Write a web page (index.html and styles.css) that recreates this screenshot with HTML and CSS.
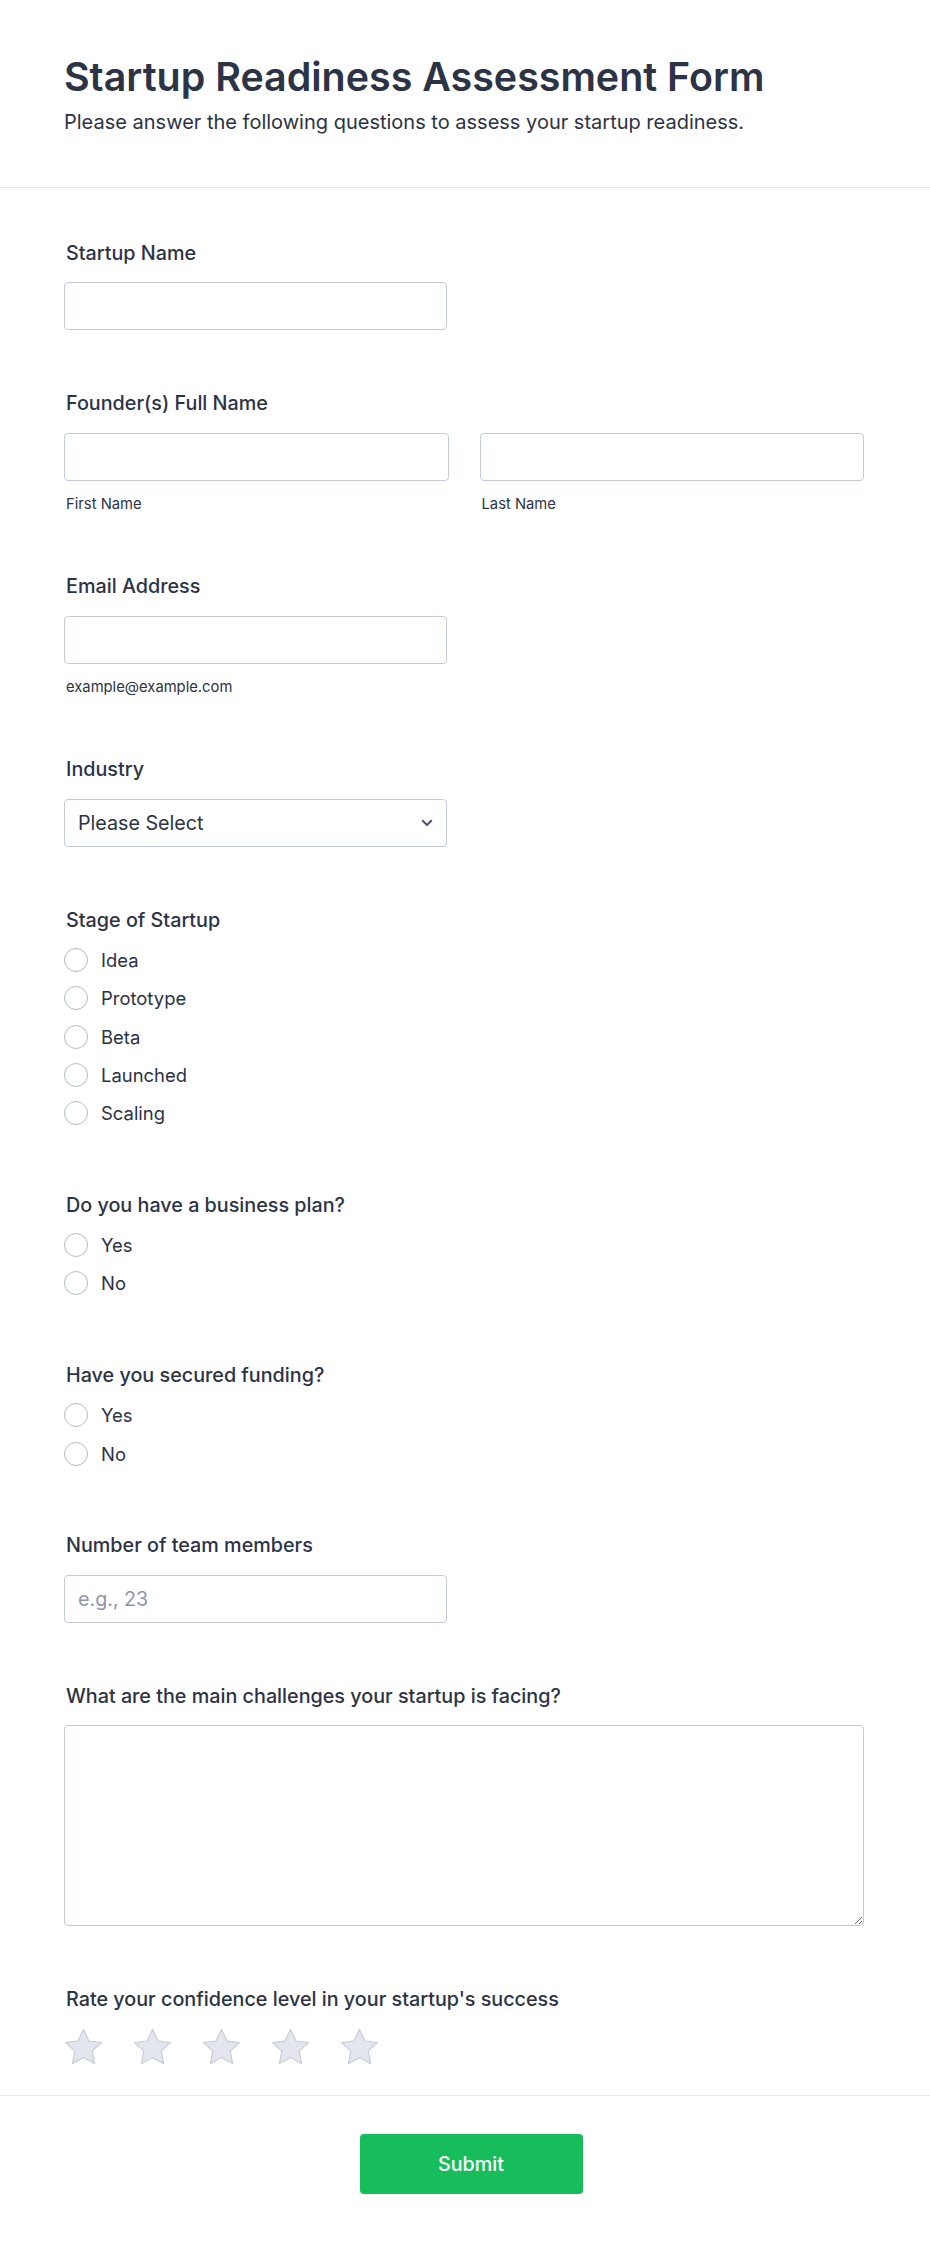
FILE: index.html
```html
<!DOCTYPE html>
<html lang="en">
<head>
<meta charset="utf-8">
<title>Startup Readiness Assessment Form</title>
<link rel="stylesheet" href="styles.css">
</head>
<body>
<div class="page">
  <header class="form-header">
    <h1 class="form-title">Startup Readiness Assessment Form</h1>
    <p class="form-subtitle">Please answer the following questions to assess your startup readiness.</p>
  </header>

  <main class="form-body">
    <div class="field">
      <label class="field-label" for="startup">Startup Name</label>
      <input class="text-input w-half" id="startup" type="text">
    </div>

    <div class="field">
      <label class="field-label">Founder(s) Full Name</label>
      <div class="name-grid">
        <div class="name-col">
          <input class="text-input" type="text">
          <span class="sublabel">First Name</span>
        </div>
        <div class="name-col">
          <input class="text-input" type="text">
          <span class="sublabel">Last Name</span>
        </div>
      </div>
    </div>

    <div class="field">
      <label class="field-label" for="email">Email Address</label>
      <input class="text-input w-half" id="email" type="email">
      <span class="sublabel">example@example.com</span>
    </div>

    <div class="field">
      <label class="field-label" for="industry">Industry</label>
      <div class="select-wrap">
        <select class="select" id="industry">
          <option>Please Select</option>
        </select>
        <svg class="chev" width="12" height="8" viewBox="0 0 12 8" aria-hidden="true">
          <polyline points="1.2,1.2 6,6 10.8,1.2" fill="none" stroke="#4b5576" stroke-width="2" stroke-linecap="butt" stroke-linejoin="miter"/>
        </svg>
      </div>
    </div>

    <div class="field">
      <label class="field-label">Stage of Startup</label>
      <div class="radio-list">
        <label class="radio"><span class="radio-circle"></span>Idea</label>
        <label class="radio"><span class="radio-circle"></span>Prototype</label>
        <label class="radio"><span class="radio-circle"></span>Beta</label>
        <label class="radio"><span class="radio-circle"></span>Launched</label>
        <label class="radio"><span class="radio-circle"></span>Scaling</label>
      </div>
    </div>

    <div class="field">
      <label class="field-label">Do you have a business plan?</label>
      <div class="radio-list">
        <label class="radio"><span class="radio-circle"></span>Yes</label>
        <label class="radio"><span class="radio-circle"></span>No</label>
      </div>
    </div>

    <div class="field">
      <label class="field-label">Have you secured funding?</label>
      <div class="radio-list">
        <label class="radio"><span class="radio-circle"></span>Yes</label>
        <label class="radio"><span class="radio-circle"></span>No</label>
      </div>
    </div>

    <div class="field">
      <label class="field-label" for="team">Number of team members</label>
      <input class="text-input w-half" id="team" type="text" placeholder="e.g., 23">
    </div>

    <div class="field">
      <label class="field-label" for="challenges">What are the main challenges your startup is facing?</label>
      <textarea class="textarea" id="challenges"></textarea>
    </div>

    <div class="field">
      <label class="field-label">Rate your confidence level in your startup's success</label>
      <div class="stars">
        <svg class="star" width="37" height="35" viewBox="2.2 2.3 19.6 18.6" aria-hidden="true"><path d="M12 2.6l2.9 6.1 6.6.8-4.9 4.6 1.3 6.6L12 17.4l-5.9 3.3 1.3-6.6-4.9-4.6 6.6-.8z"/></svg>
        <svg class="star" width="37" height="35" viewBox="2.2 2.3 19.6 18.6" aria-hidden="true"><path d="M12 2.6l2.9 6.1 6.6.8-4.9 4.6 1.3 6.6L12 17.4l-5.9 3.3 1.3-6.6-4.9-4.6 6.6-.8z"/></svg>
        <svg class="star" width="37" height="35" viewBox="2.2 2.3 19.6 18.6" aria-hidden="true"><path d="M12 2.6l2.9 6.1 6.6.8-4.9 4.6 1.3 6.6L12 17.4l-5.9 3.3 1.3-6.6-4.9-4.6 6.6-.8z"/></svg>
        <svg class="star" width="37" height="35" viewBox="2.2 2.3 19.6 18.6" aria-hidden="true"><path d="M12 2.6l2.9 6.1 6.6.8-4.9 4.6 1.3 6.6L12 17.4l-5.9 3.3 1.3-6.6-4.9-4.6 6.6-.8z"/></svg>
        <svg class="star" width="37" height="35" viewBox="2.2 2.3 19.6 18.6" aria-hidden="true"><path d="M12 2.6l2.9 6.1 6.6.8-4.9 4.6 1.3 6.6L12 17.4l-5.9 3.3 1.3-6.6-4.9-4.6 6.6-.8z"/></svg>
      </div>
    </div>
  </main>

  <footer class="form-footer">
    <button class="submit-btn" type="button">Submit</button>
  </footer>
</div>
</body>
</html>
```

FILE: styles.css
```css
html, body {
  margin: 0;
  padding: 0;
  background: #ffffff;
}

body {
  font-family: Inter, "Noto Sans", "Liberation Sans", sans-serif;
  color: #2c3345;
}

.page {
  width: 930px;
}

.form-header {
  padding: 53px 64px 52px;
  border-bottom: 1px solid #e3e6ee;
}

.form-title {
  margin: 0;
  font-size: 39.4px;
  line-height: 48px;
  font-weight: 600;
  color: #2c3345;
}

.form-subtitle {
  margin: 8px 0 0;
  font-size: 20px;
  line-height: 26px;
  font-weight: 400;
}

.form-body {
  padding: 51.5px 66px 31px 64px;
  display: flex;
  flex-direction: column;
  gap: 60px;
}

.field {
  display: flex;
  flex-direction: column;
  align-items: flex-start;
}

.field-label {
  display: block;
  font-size: 19.75px;
  line-height: 26px;
  font-weight: 500;
  padding-left: 2px;
  margin-bottom: 16.5px;
}

.text-input {
  box-sizing: border-box;
  height: 48px;
  border: 1px solid #c3cad8;
  border-radius: 4px;
  padding: 0 13px;
  font-family: inherit;
  font-size: 19.7px;
  color: #2c3345;
  background: #ffffff;
  outline: none;
}

.text-input::placeholder {
  color: #8f96a8;
}

.w-half {
  width: 383px;
}

.name-grid {
  display: grid;
  grid-template-columns: 1fr 1fr;
  column-gap: 31px;
  width: 100%;
}

.name-col {
  display: flex;
  flex-direction: column;
}

.name-col .text-input {
  width: 100%;
}

.sublabel {
  display: block;
  margin-top: 14.5px;
  font-size: 14.77px;
  line-height: 18px;
  padding-left: 2px;
  color: #2c3345;
}

.select-wrap {
  position: relative;
  width: 383px;
}

.select {
  -webkit-appearance: none;
  appearance: none;
  box-sizing: border-box;
  width: 100%;
  height: 48px;
  border: 1px solid #c3cad8;
  border-radius: 4px;
  padding: 0 40px 0 13px;
  font-family: inherit;
  font-size: 19.7px;
  color: #2c3345;
  background: #ffffff;
  outline: none;
}

.chev {
  position: absolute;
  right: 14px;
  top: 20px;
  pointer-events: none;
}

.radio-list {
  display: flex;
  flex-direction: column;
  gap: 12.25px;
  margin-top: -2px;
  padding-bottom: 5.5px;
}

.radio {
  display: flex;
  align-items: center;
  gap: 13px;
  height: 26px;
  font-size: 18.46px;
  line-height: 26px;
  font-weight: 400;
}

.radio-circle {
  box-sizing: border-box;
  width: 24px;
  height: 24px;
  border: 1px solid #b4bac8;
  border-radius: 50%;
  background: #ffffff;
  flex: none;
}

.textarea {
  box-sizing: border-box;
  width: 100%;
  height: 201px;
  border: 1px solid #c3cad8;
  border-radius: 4px;
  padding: 12px 13px;
  font-family: inherit;
  font-size: 19.7px;
  color: #2c3345;
  background: #ffffff;
  outline: none;
}

.stars {
  display: flex;
  gap: 32px;
  padding-left: 1px;
}

.star {
  display: block;
}

.star path {
  fill: #e3e6ef;
  stroke: #c6cad6;
  stroke-width: 0.6;
  stroke-linejoin: round;
}

.form-footer {
  border-top: 1px solid #e3e6ee;
  padding: 38px 0 48px 12px;
  display: flex;
  justify-content: center;
}

.submit-btn {
  width: 223px;
  height: 60px;
  border: none;
  border-radius: 4px;
  background: #18bd5b;
  color: #ffffff;
  font-family: inherit;
  font-size: 19.7px;
  font-weight: 500;
  cursor: pointer;
}
```
